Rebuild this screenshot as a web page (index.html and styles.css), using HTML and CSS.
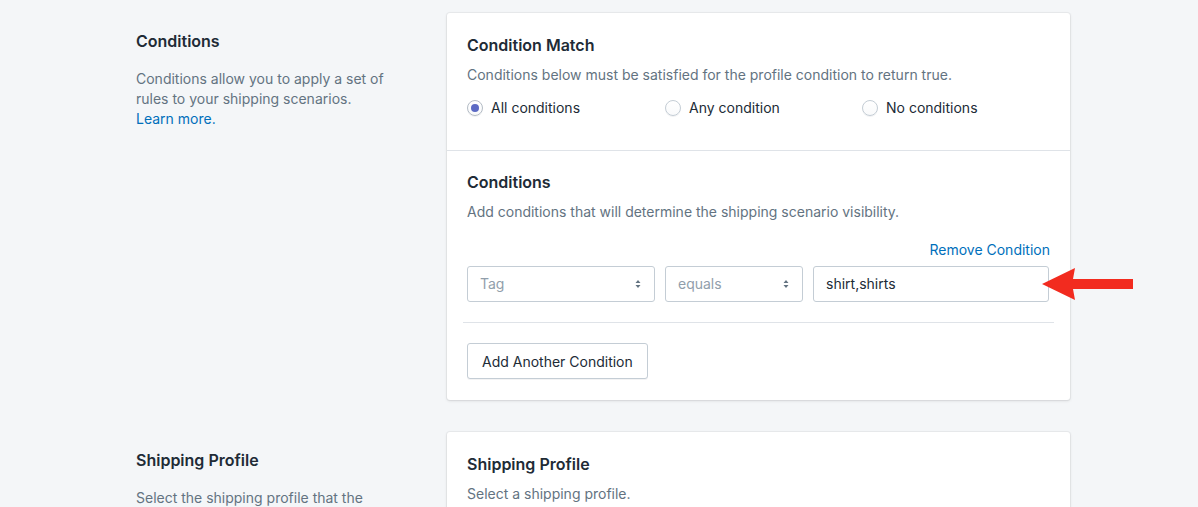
FILE: index.html
```html
<!DOCTYPE html>
<html>
<head>
<meta charset="utf-8">
<link rel="stylesheet" href="styles.css">
</head>
<body>
<div class="page">
  <section class="layout">
    <div class="aside">
      <h2 class="aside-title">Conditions</h2>
      <p class="aside-text">Conditions allow you to apply a set of rules to your shipping scenarios. <a class="link" href="#">Learn more.</a></p>
    </div>
    <div class="card">
      <div class="card-section">
        <h3 class="card-title">Condition Match</h3>
        <p class="card-text">Conditions below must be satisfied for the profile condition to return true.</p>
        <div class="radios">
          <label class="radio"><span class="radio-dot checked"></span>All conditions</label>
          <label class="radio"><span class="radio-dot"></span>Any condition</label>
          <label class="radio"><span class="radio-dot"></span>No conditions</label>
        </div>
      </div>
      <div class="card-section second">
        <h3 class="card-title">Conditions</h3>
        <p class="card-text">Add conditions that will determine the shipping scenario visibility.</p>
        <div class="remove-row"><a class="link" href="#">Remove Condition</a></div>
        <div class="cond-row">
          <div class="select sel-tag"><span>Tag</span><svg class="caret" width="8" height="12" viewBox="0 0 8 12"><path d="M4 2 L6.5 5 H1.5 Z M4 10 L6.5 7 H1.5 Z" fill="#637381"/></svg></div>
          <div class="select sel-op"><span>equals</span><svg class="caret" width="8" height="12" viewBox="0 0 8 12"><path d="M4 2 L6.5 5 H1.5 Z M4 10 L6.5 7 H1.5 Z" fill="#637381"/></svg></div>
          <div class="text-input">shirt,shirts</div>
          <svg class="arrow" width="96" height="36" viewBox="0 0 96 36"><path d="M2 18 L35 2 L33 13 H93 V23 H33 L35 34 Z" fill="#f22b1f"/></svg>
        </div>
        <div class="divider"></div>
        <button class="btn">Add Another Condition</button>
      </div>
    </div>
  </section>
  <section class="layout">
    <div class="aside">
      <h2 class="aside-title">Shipping Profile</h2>
      <p class="aside-text">Select the shipping profile that the</p>
    </div>
    <div class="card">
      <div class="card-section">
        <h3 class="card-title">Shipping Profile</h3>
        <p class="card-text">Select a shipping profile.</p>
      </div>
    </div>
  </section>
</div>
</body>
</html>
```
FILE: styles.css
```css
* { box-sizing: border-box; }
html, body { margin: 0; padding: 0; }
body {
  background: #f4f6f8;
  font-family: Inter, "Noto Sans", sans-serif;
  font-size: 14px;
  line-height: 20px;
  color: #212b36;
  height: 507px;
  overflow: hidden;
}
.page {
  padding: 13px 0 0 136px;
}
.layout {
  display: flex;
  align-items: flex-start;
  margin-bottom: 32px;
}
.aside {
  width: 250px;
  margin-right: 61px;
  padding-top: 16px;
}
.aside-title {
  margin: 0 0 16px;
  font-size: 16px;
  line-height: 24px;
  font-weight: 600;
  color: #212b36;
}
.aside-text {
  margin: 0;
  color: #637381;
}
.link {
  color: #006fbb;
  text-decoration: none;
}
.card {
  width: 623px;
  background: #fff;
  border-radius: 3px;
  box-shadow: 0 0 0 1px rgba(63,63,68,0.05), 0 1px 3px 0 rgba(63,63,68,0.15);
}
.card-section {
  padding: 20px 20px 32px;
}
.card-section.second {
  border-top: 1px solid #dfe3e8;
  padding: 19px 20px 21px;
}
.card-title {
  margin: 0 0 8px;
  font-size: 16px;
  line-height: 24px;
  font-weight: 600;
}
.card-text {
  margin: 0;
  color: #637381;
}
.radios {
  display: grid;
  grid-template-columns: 198px 197px 1fr;
  margin-top: 13px;
}
.radio {
  display: flex;
  align-items: center;
  color: #212b36;
}
.radio-dot {
  width: 16px;
  height: 16px;
  border-radius: 50%;
  border: 1px solid #c4cdd5;
  background: linear-gradient(#fff, #f9fafb);
  box-shadow: 0 1px 0 rgba(22,29,37,0.05);
  margin-right: 8px;
  display: inline-flex;
  align-items: center;
  justify-content: center;
}
.radio-dot.checked {
  border-color: #b4bcc5;
}
.radio-dot.checked::after {
  content: "";
  width: 8px;
  height: 8px;
  border-radius: 50%;
  background: #5c6ac4;
}
.remove-row {
  display: flex;
  justify-content: flex-end;
  margin-top: 18px;
}
.cond-row {
  position: relative;
  display: flex;
  gap: 10px;
  margin-top: 6px;
  padding-right: 1px;
}
.select, .text-input {
  height: 36px;
  border: 1px solid #c4cdd5;
  border-radius: 3px;
  display: flex;
  align-items: center;
  padding: 0 12px;
  background: #fff;
}
.select {
  justify-content: space-between;
  color: #919eab;
}
.sel-tag { width: 188px; }
.sel-op { width: 138px; }
.text-input {
  flex: 1;
  color: #212b36;
}
.caret { display: block; }
.arrow {
  position: absolute;
  right: -86px;
  top: 0;
}
.divider {
  height: 1px;
  background: #dfe3e8;
  margin: 20px -4px 20px;
}
.btn {
  font-family: inherit;
  font-size: 14px;
  color: #212b36;
  background: #fff;
  border: 1px solid #c4cdd5;
  border-radius: 3px;
  height: 36px;
  padding: 0 14px;
  box-shadow: 0 1px 0 rgba(22,29,37,0.05);
}
```
